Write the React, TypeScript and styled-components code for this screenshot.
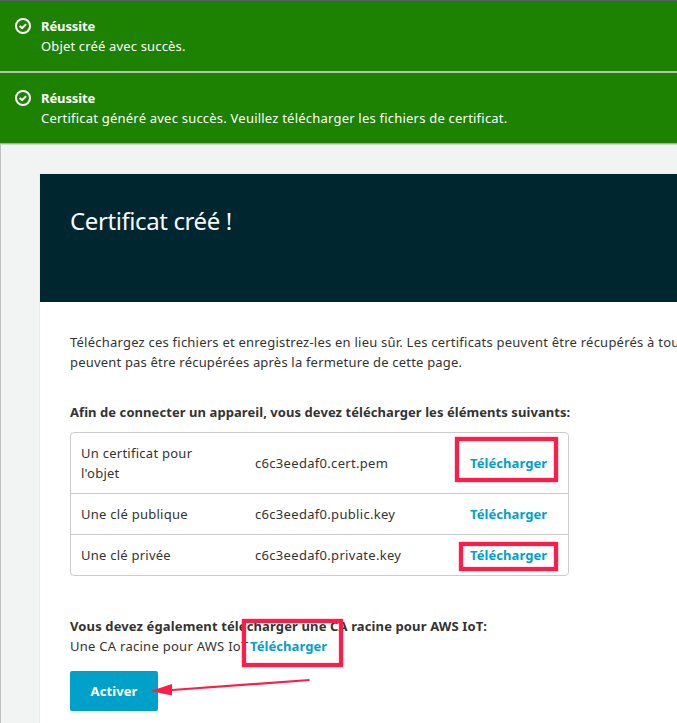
import React from "react";
import styled, { createGlobalStyle } from "styled-components";

const accent = "#00a1c9";
const marker = "#ff1c49";

const GlobalStyle = createGlobalStyle`
  *, *::before, *::after { box-sizing: border-box; }
  html, body { margin: 0; height: 100%; overflow: hidden; }
  body {
    background: #f2f3f3;
    color: #333;
    font-family: "Noto Sans", "Open Sans", sans-serif;
    font-size: 13px;
    line-height: 20px;
  }
`;

const Page = styled.div`
  display: flex;
  flex-direction: column;
  width: 677px;
  height: 723px;
  overflow: hidden;
  white-space: nowrap;
  border-top: 1px solid #5a6068;
`;

const Text = styled.span<{ $track?: number; $bold?: boolean }>`
  letter-spacing: ${(p) => p.$track ?? 0}px;
  font-weight: ${(p) => (p.$bold ? 700 : 400)};
`;

const Flash = styled.section<{ $divided?: boolean }>`
  display: flex;
  gap: 10px;
  height: ${(p) => (p.$divided ? 72 : 71)}px;
  flex: none;
  padding: 15px 15px 0;
  background: #1d8102;
  color: #fff;
  border-bottom: ${(p) => (p.$divided ? "2px solid #b5c1b7" : "1px solid #9fb29c")};
`;

const FlashIcon = styled.svg`
  width: 16px;
  height: 16px;
  flex: none;
  margin-top: 2px;
  fill: none;
  stroke: #fff;
  stroke-width: 2;
`;

const FlashBody = styled.div`
  display: flex;
  flex-direction: column;
`;

const Main = styled.main`
  flex: 1;
  display: flex;
  padding: 29px 0 0 39px;
  border-top: 1px solid #d0d6d8;
  border-left: 1px solid #bcc1c4;
`;

const Card = styled.article`
  flex: 1;
  min-width: 0;
  background: #fff;
  box-shadow: 0 1px 1px rgba(0, 28, 36, 0.15), 0 0 1px rgba(0, 28, 36, 0.1);
`;

const CardHeader = styled.header`
  height: 128px;
  padding: 31px 30px;
  background: #00262f;
`;

const Title = styled.h1`
  margin: 0;
  color: #fafafa;
  font-size: 24px;
  font-weight: 400;
  line-height: 32px;
  letter-spacing: -0.4px;
`;

const CardBody = styled.div`
  display: flex;
  flex-direction: column;
  align-items: flex-start;
  padding: 30px 30px 0;
`;

const Paragraph = styled.p`
  display: flex;
  flex-direction: column;
  margin: 0 0 30px;
`;

const FileTable = styled.div`
  width: 499px;
  margin: 10px 0 40px;
  border: 1px solid #ccc;
  border-radius: 4px;
`;

const FileRow = styled.div`
  display: grid;
  grid-template-columns: 174px 215px 1fr;
  align-items: center;
  padding: 10px;
  & + & {
    border-top: 1px solid #ccc;
  }
`;

const FileLabel = styled.div`
  display: flex;
  flex-direction: column;
`;

const Link = styled.a`
  position: relative;
  justify-self: start;
  color: ${accent};
  font-weight: 700;
  letter-spacing: 0.07px;
`;

const Highlight = styled.i<{ $x: number; $y: number; $w: number; $h: number }>`
  position: absolute;
  left: ${(p) => p.$x}px;
  top: ${(p) => p.$y}px;
  width: ${(p) => p.$w}px;
  height: ${(p) => p.$h}px;
  border: 4px solid ${marker};
  box-shadow: 0 0 1px ${marker}, inset 0 0 1px ${marker};
`;

const RootCaLine = styled.div`
  display: grid;
  grid-template-columns: 180px auto;
`;

const ActivateButton = styled.button`
  position: relative;
  width: 88px;
  height: 40px;
  margin-top: 15px;
  padding: 0;
  border: 0;
  border-radius: 2px;
  background: ${accent};
  color: #fff;
  font: inherit;
  font-weight: 700;
  letter-spacing: 0.1px;
`;

const Arrow = styled.svg`
  position: absolute;
  left: 80px;
  top: 4px;
  width: 162px;
  height: 24px;
  fill: ${marker};
  stroke: ${marker};
`;

function SuccessFlash({ message, track, divided }: { message: string; track: number; divided?: boolean }) {
  return (
    <Flash $divided={divided}>
      <FlashIcon viewBox="0 0 16 16">
        <circle cx="8" cy="8" r="7" />
        <path d="M4.6 7.9 7.1 10.1 11.1 6.1" />
      </FlashIcon>
      <FlashBody>
        <Text $bold $track={-0.1}>Réussite</Text>
        <Text $track={track}>{message}</Text>
      </FlashBody>
    </Flash>
  );
}

export default function App() {
  return (
    <Page>
      <GlobalStyle />
      <SuccessFlash message="Objet créé avec succès." track={0.16} divided />
      <SuccessFlash
        message="Certificat généré avec succès. Veuillez télécharger les fichiers de certificat."
        track={0.215}
      />
      <Main>
        <Card>
          <CardHeader>
            <Title>Certificat créé !</Title>
          </CardHeader>
          <CardBody>
            <Paragraph>
              <Text $track={0.225}>
                Téléchargez ces fichiers et enregistrez-les en lieu sûr. Les certificats peuvent être récupérés à tout
              </Text>
              <Text $track={0.19}>peuvent pas être récupérées après la fermeture de cette page.</Text>
            </Paragraph>
            <Text $bold $track={0.065}>
              Afin de connecter un appareil, vous devez télécharger les éléments suivants:
            </Text>
            <FileTable>
              <FileRow>
                <FileLabel>
                  <Text $track={0.26}>Un certificat pour</Text>
                  <Text $track={0.26}>l'objet</Text>
                </FileLabel>
                <Text $track={0.31}>c6c3eedaf0.cert.pem</Text>
                <Link>
                  Télécharger
                  <Highlight $x={-15} $y={-16} $w={103} $h={45} />
                </Link>
              </FileRow>
              <FileRow>
                <Text $track={0.26}>Une clé publique</Text>
                <Text $track={0.31}>c6c3eedaf0.public.key</Text>
                <Link>Télécharger</Link>
              </FileRow>
              <FileRow>
                <Text $track={0.24}>Une clé privée</Text>
                <Text $track={0.31}>c6c3eedaf0.private.key</Text>
                <Link>
                  Télécharger
                  <Highlight $x={-11} $y={-3} $w={99} $h={29} />
                </Link>
              </FileRow>
            </FileTable>
            <Text $bold $track={0.125}>Vous devez également télécharger une CA racine pour AWS IoT:</Text>
            <RootCaLine>
              <Text $track={0.27}>Une CA racine pour AWS IoT</Text>
              <Link>
                Télécharger
                <Highlight $x={-8} $y={-17} $w={101} $h={48} />
              </Link>
            </RootCaLine>
            <ActivateButton>
              Activer
              <Arrow viewBox="0 0 162 24">
                <path d="M22 15 159.5 5" strokeWidth="2.2" />
                <path d="M.5 16 22 9V20.5Z" stroke="none" />
              </Arrow>
            </ActivateButton>
          </CardBody>
        </Card>
      </Main>
    </Page>
  );
}
